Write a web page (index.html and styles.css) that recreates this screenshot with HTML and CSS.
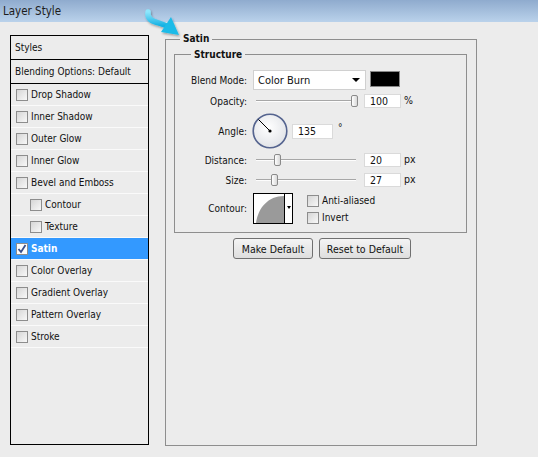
FILE: index.html
```html
<!DOCTYPE html>
<html>
<head>
<meta charset="utf-8">
<link rel="stylesheet" href="styles.css">
</head>
<body>
<div class="titlebar">Layer Style</div>
<div class="main">
  <div class="stylelist">
    <div class="row head">Styles</div>
    <div class="row head">Blending Options: Default</div>
    <div class="row item"><span class="cb"></span>Drop Shadow</div>
    <div class="row item"><span class="cb"></span>Inner Shadow</div>
    <div class="row item"><span class="cb"></span>Outer Glow</div>
    <div class="row item"><span class="cb"></span>Inner Glow</div>
    <div class="row item"><span class="cb"></span>Bevel and Emboss</div>
    <div class="row item sub"><span class="cb"></span>Contour</div>
    <div class="row item sub"><span class="cb"></span>Texture</div>
    <div class="row item selected"><span class="cb checked"><svg width="10" height="10" viewBox="0 0 10 10"><path d="M1.5 5 L4 8 L8.5 1" fill="none" stroke="#3a4f8a" stroke-width="1.8"/></svg></span>Satin</div>
    <div class="row item"><span class="cb"></span>Color Overlay</div>
    <div class="row item"><span class="cb"></span>Gradient Overlay</div>
    <div class="row item"><span class="cb"></span>Pattern Overlay</div>
    <div class="row item"><span class="cb"></span>Stroke</div>
  </div>
  <fieldset class="satin">
    <legend>Satin</legend>
    <fieldset class="structure">
      <legend>Structure</legend>
      <div class="frow r-blend">
        <div class="lbl">Blend Mode:</div>
        <div class="select"><span>Color Burn</span><span class="arrow"></span></div>
        <div class="swatch"></div>
      </div>
      <div class="frow r-opacity">
        <div class="lbl">Opacity:</div>
        <div class="slider"><div class="track"></div><div class="thumb" style="left:96px"></div></div>
        <div class="inp">100</div>
        <div class="unit">%</div>
      </div>
      <div class="frow r-angle">
        <div class="lbl">Angle:</div>
        <div class="dial"><svg width="36" height="36" viewBox="0 0 36 36"><defs><radialGradient id="dg" cx="0.45" cy="0.4" r="0.6"><stop offset="0" stop-color="#ffffff"/><stop offset="1" stop-color="#e2e4e8"/></radialGradient></defs><circle cx="18" cy="18" r="16.8" fill="url(#dg)" stroke="#55648f" stroke-width="1.6"/><line x1="18" y1="18" x2="6.5" y2="6.5" stroke="#000" stroke-width="1"/><circle cx="18" cy="18" r="1.6" fill="#000"/></svg></div>
        <div class="inp ang">135</div>
        <div class="deg">°</div>
      </div>
      <div class="frow r-distance">
        <div class="lbl">Distance:</div>
        <div class="slider"><div class="track"></div><div class="thumb" style="left:19px"></div></div>
        <div class="inp">20</div>
        <div class="unit">px</div>
      </div>
      <div class="frow r-size">
        <div class="lbl">Size:</div>
        <div class="slider"><div class="track"></div><div class="thumb" style="left:16px"></div></div>
        <div class="inp">27</div>
        <div class="unit">px</div>
      </div>
      <div class="frow r-contour">
        <div class="lbl">Contour:</div>
        <div class="contour">
          <svg width="30" height="29" viewBox="0 0 30 29"><rect width="30" height="29" fill="#fff"/><path d="M2 29 C4 14 14 2 30 2 L30 29 Z" fill="#9a9a9a"/></svg>
          <div class="cdrop"><span class="arrow small"></span></div>
        </div>
        <div class="checks">
          <div class="chk"><span class="cb"></span>Anti-aliased</div>
          <div class="chk"><span class="cb"></span>Invert</div>
        </div>
      </div>
    </fieldset>
    <div class="buttons">
      <div class="btn w1">Make Default</div>
      <div class="btn w2">Reset to Default</div>
    </div>
  </fieldset>
</div>
<svg class="pointer" width="46" height="38" viewBox="0 0 46 38">
  <defs>
    <linearGradient id="ag" x1="0" y1="0" x2="0" y2="1">
      <stop offset="0" stop-color="#8ee6fc"/>
      <stop offset="1" stop-color="#16b2e4"/>
    </linearGradient>
    <filter id="sh" x="-30%" y="-30%" width="160%" height="160%">
      <feDropShadow dx="1" dy="1.5" stdDeviation="1" flood-color="#000" flood-opacity="0.35"/>
    </filter>
  </defs>
  <g filter="url(#sh)">
    <path d="M8 7 Q7 15 17 17.5 L26 20.5" fill="none" stroke="url(#ag)" stroke-width="5.5" stroke-linecap="round"/>
    <polygon points="21,27 31,12 39,30" fill="#1fbbe8"/>
  </g>
</svg>
</body>
</html>
```
FILE: styles.css
```css
html, body {
  margin: 0;
  padding: 0;
}
body {
  width: 538px;
  height: 457px;
  background: #ececec;
  font-family: "DejaVu Sans Condensed", "DejaVu Sans", sans-serif;
  font-stretch: semi-condensed;
  font-size: 10px;
  color: #111;
  position: relative;
  overflow: hidden;
}
.titlebar {
  height: 22px;
  box-sizing: border-box;
  padding: 4px 0 0 3px;
  font-size: 11.5px;
  color: #1c1c1c;
  background: linear-gradient(#8fabce, #bad2eb);
}
.main {
  display: flex;
  align-items: flex-start;
  padding: 10px 0 0 10px;
}
.stylelist {
  margin-top: 3px;
  width: 139px;
  height: 410px;
  box-sizing: border-box;
  border: 1px solid #000;
  background: #ececec;
}
.row {
  display: flex;
  align-items: center;
  box-sizing: border-box;
}
.row.head {
  height: 24px;
  padding-left: 4px;
  border-bottom: 1px solid #000;
}
.row.item {
  height: 22px;
  padding-left: 5px;
  border-bottom: 1px solid #fafafa;
}
.row.item.sub {
  padding-left: 19px;
}
.row.selected {
  background: #3399ff;
  color: #fff;
  font-weight: bold;
}
.cb {
  display: inline-flex;
  align-items: center;
  justify-content: center;
  width: 12px;
  height: 12px;
  box-sizing: border-box;
  border: 1px solid #8d8d8d;
  background: linear-gradient(135deg, #d6d6d6, #f8f8f8);
  margin-right: 3px;
  flex: none;
}
.cb.checked {
  background: #fdfdfd;
}
.satin {
  margin: 0 0 0 16px;
  padding: 0;
  width: 312px;
  height: 414px;
  box-sizing: border-box;
  border: 1px solid #8e8e8e;
  min-width: 0;
}
.satin > legend {
  margin-left: 14px;
  padding: 0 3px;
  font-weight: bold;
  line-height: 14px;
}
.structure {
  margin: 2px 0 0 8px;
  padding: 0 0 8px 0;
  width: 293px;
  box-sizing: border-box;
  border: 1px solid #8e8e8e;
  min-width: 0;
}
.structure > legend {
  margin-left: 16px;
  padding: 0 3px;
  font-weight: bold;
  line-height: 13px;
}
.frow {
  display: flex;
  align-items: center;
}
.lbl {
  width: 72px;
  text-align: right;
  margin-right: 6px;
  flex: none;
}
.r-blend { margin-top: 9px; height: 20px; }
.r-opacity { margin-top: 4px; height: 14px; }
.r-angle { margin-top: 5px; height: 36px; }
.r-distance { margin-top: 4px; height: 14px; }
.r-size { margin-top: 6px; height: 14px; }
.r-contour { margin-top: 6px; height: 31px; }
.select {
  width: 113px;
  height: 20px;
  box-sizing: border-box;
  border: 1px solid #d0d0d0;
  background: #fff;
  display: flex;
  align-items: center;
  justify-content: space-between;
  padding: 0 5px 0 4px;
  font-size: 11px;
}
.arrow {
  width: 0;
  height: 0;
  border-left: 4px solid transparent;
  border-right: 4px solid transparent;
  border-top: 4px solid #000;
}
.arrow.small {
  border-left-width: 2.5px;
  border-right-width: 2.5px;
  border-top-width: 3px;
}
.swatch {
  width: 30px;
  height: 16px;
  box-sizing: border-box;
  margin-left: 4px;
  margin-top: -3px;
  background: #000;
  border: 1px solid #888;
}
.slider {
  position: relative;
  width: 104px;
  height: 14px;
  margin-left: 2px;
  flex: none;
}
.track {
  position: absolute;
  left: 1px;
  right: 3px;
  top: 6px;
  height: 1px;
  background: #a7a7a7;
  border-bottom: 1px solid #fdfdfd;
}
.thumb {
  position: absolute;
  top: 1px;
  width: 7px;
  height: 12px;
  box-sizing: border-box;
  border: 1px solid #8a8a8a;
  border-radius: 2px;
  background: linear-gradient(90deg, #ffffff, #d8d8d8);
}
.inp {
  width: 37px;
  height: 14px;
  box-sizing: border-box;
  margin-left: 5px;
  padding-left: 5px;
  background: #fff;
  border: 1px solid #dadada;
  line-height: 13px;
  font-size: 10.5px;
}
.inp.ang {
  width: 41px;
  height: 15px;
  margin-left: 4px;
}
.unit {
  margin-left: 3px;
  margin-top: -3px;
  font-size: 10.5px;
}
.deg {
  margin-left: 5px;
  margin-top: -8px;
}
.dial {
  width: 36px;
  height: 36px;
  margin-left: -1px;
}
.dial svg { display: block; }
.contour {
  display: flex;
  width: 40px;
  height: 31px;
  box-sizing: border-box;
  border: 1px solid #000;
  background: #fff;
}
.contour svg { display: block; }
.cdrop {
  flex: 1;
  border-left: 1px solid #000;
  display: flex;
  align-items: center;
  justify-content: center;
  padding-bottom: 3px;
}
.checks {
  margin-left: 14px;
  display: flex;
  flex-direction: column;
  gap: 5px;
  margin-top: 1px;
}
.chk {
  display: flex;
  align-items: center;
}
.buttons {
  display: flex;
  justify-content: center;
  gap: 6px;
  margin-top: 5px;
  padding-left: 2px;
}
.btn {
  height: 21px;
  box-sizing: border-box;
  border: 1px solid #707070;
  border-radius: 3px;
  background: linear-gradient(#f4f4f4, #dedede);
  display: flex;
  align-items: center;
  justify-content: center;
  font-size: 10.5px;
}
.btn.w1 { width: 80px; }
.btn.w2 { width: 92px; }
.pointer {
  position: absolute;
  left: 140px;
  top: 5px;
}
```
